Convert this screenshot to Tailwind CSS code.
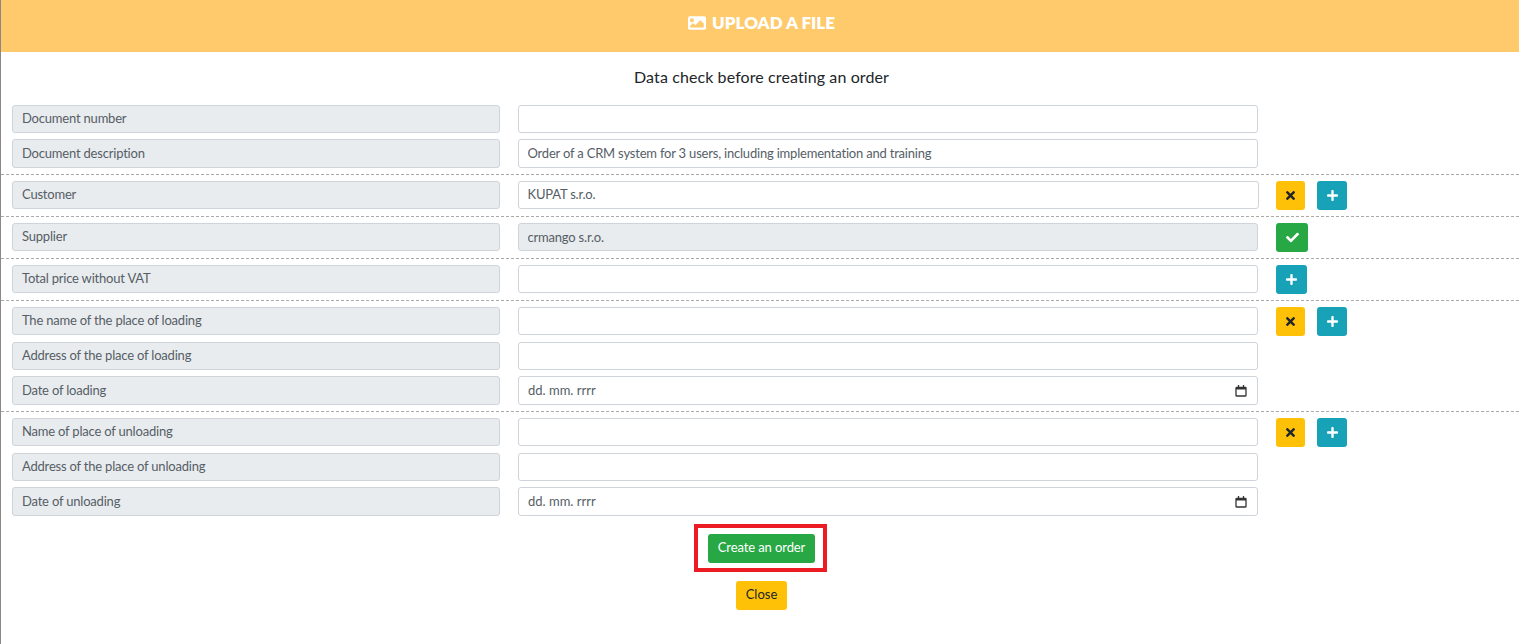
<!DOCTYPE html>
<html lang="en">
<head>
  <meta charset="UTF-8" />
  <meta name="viewport" content="width=device-width, initial-scale=1.0" />
  <title>Upload a file</title>
  <script src="https://cdn.jsdelivr.net/npm/@tailwindcss/browser@4"></script>
</head>
<body class="bg-white text-[#212529] font-[Lato,sans-serif] h-[644px] overflow-hidden border-l border-[#888]">

  <div class="h-[52px] pb-[6px] bg-[#ffca6b] flex items-center justify-center gap-[6px] pl-[3px] text-white text-[17px] font-extrabold">
    <svg class="w-[18px] h-[18px]" viewBox="0 0 512 512" fill="currentColor"><path d="M464 448H48c-26.51 0-48-21.49-48-48V112c0-26.51 21.49-48 48-48h416c26.51 0 48 21.49 48 48v288c0 26.51-21.49 48-48 48zM112 120c-30.928 0-56 25.072-56 56s25.072 56 56 56 56-25.072 56-56-25.072-56-56-56zM64 384h384V272l-87.515-87.515c-4.686-4.686-12.284-4.686-16.971 0L208 320l-55.515-55.515c-4.686-4.686-12.284-4.686-16.971 0L64 336v48z"/></svg>
    <span>UPLOAD A FILE</span>
  </div>

  <h2 class="h-[52.75px] pt-[15px] pl-[3px] text-center text-[16px] leading-[20px] tracking-[0.1px]">Data check before creating an order</h2>

  <!-- document -->
  <div class="px-[11px] pb-[6px] flex flex-col gap-[6px]">
    <div class="flex items-center gap-[18px]">
      <div class="w-[488px] h-[28.5px] px-[9px] pb-[0.5px] flex items-center bg-[#e9ecef] border border-[#ced4da] rounded-[3px] text-[13px] tracking-[-0.2px] text-[#565e66]">Document number</div>
      <input type="text" class="w-[740px] h-[28.5px] px-[8.5px] pb-[1px] border border-[#ced4da] rounded-[3px] text-[13px] tracking-[-0.2px] text-[#565e66]" />
    </div>
    <div class="flex items-center gap-[18px]">
      <div class="w-[488px] h-[28.5px] px-[9px] pb-[0.5px] flex items-center bg-[#e9ecef] border border-[#ced4da] rounded-[3px] text-[13px] tracking-[-0.2px] text-[#565e66]">Document description</div>
      <input type="text" value="Order of a CRM system for 3 users, including implementation and training" class="w-[740px] h-[28.5px] px-[8.5px] pb-[1px] border border-[#ced4da] rounded-[3px] text-[13px] tracking-[-0.2px] text-[#565e66]" />
    </div>
  </div>

  <!-- customer -->
  <div class="border-t border-dashed border-[#aaa] px-[11px] pt-[6px] pb-[6.5px]">
    <div class="flex items-center">
      <div class="w-[488px] h-[28.5px] px-[9px] pb-[0.5px] flex items-center bg-[#e9ecef] border border-[#ced4da] rounded-[3px] text-[13px] tracking-[-0.2px] text-[#565e66]">Customer</div>
      <input type="text" value="KUPAT s.r.o." class="ml-[18px] w-[741px] h-[28.5px] px-[8.5px] pb-[2px] border border-[#ced4da] rounded-[3px] text-[13px] tracking-[-0.2px] text-[#565e66]" />
      <button class="ml-[17px] my-[-0.25px] w-[29px] h-[29px] bg-[#ffc107] rounded-[3px] flex items-center justify-center text-[#212529]">
        <svg class="h-[13px] w-[9px]" viewBox="0 0 352 512" fill="currentColor"><path d="M242.72 256l100.07-100.07c12.28-12.28 12.28-32.19 0-44.48l-22.24-22.24c-12.28-12.28-32.19-12.28-44.48 0L176 189.28 75.93 89.21c-12.28-12.28-32.19-12.28-44.48 0L9.21 111.45c-12.28 12.28-12.28 32.19 0 44.48L109.28 256 9.21 356.07c-12.28 12.28-12.28 32.19 0 44.48l22.24 22.24c12.28 12.28 32.2 12.28 44.48 0L176 322.72l100.07 100.07c12.28 12.28 32.2 12.28 44.48 0l22.24-22.24c12.28-12.28 12.28-32.19 0-44.48L242.72 256z"/></svg>
      </button>
      <button class="ml-[12px] my-[-0.25px] w-[30px] h-[29px] bg-[#17a2b8] rounded-[3px] flex items-center justify-center text-white">
        <svg class="h-[13px] w-[11px]" viewBox="0 0 448 512" fill="currentColor"><path d="M416 208H272V64c0-17.67-14.33-32-32-32h-32c-17.67 0-32 14.33-32 32v144H32c-17.67 0-32 14.33-32 32v32c0 17.67 14.33 32 32 32h144v144c0 17.67 14.33 32 32 32h32c17.67 0 32-14.33 32-32V304h144c17.67 0 32-14.33 32-32v-32c0-17.67-14.33-32-32-32z"/></svg>
      </button>
    </div>
  </div>

  <!-- supplier -->
  <div class="border-t border-dashed border-[#aaa] px-[11px] pt-[6px] pb-[6.5px]">
    <div class="flex items-center">
      <div class="w-[488px] h-[28.5px] px-[9px] pb-[0.5px] flex items-center bg-[#e9ecef] border border-[#ced4da] rounded-[3px] text-[13px] tracking-[-0.2px] text-[#565e66]">Supplier</div>
      <input type="text" disabled value="crmango s.r.o." class="ml-[18px] w-[740px] h-[28.5px] px-[8.5px] pb-[1px] bg-[#e9ecef] border border-[#ced4da] rounded-[3px] text-[13px] tracking-[-0.2px] text-[#565e66]" />
      <button class="ml-[18px] my-[-0.25px] w-[32px] h-[29px] bg-[#28a745] rounded-[3px] flex items-center justify-center text-white">
        <svg class="h-[13px] w-[13px]" viewBox="0 0 512 512" fill="currentColor"><path d="M173.898 439.404l-166.4-166.4c-9.997-9.997-9.997-26.206 0-36.204l36.203-36.204c9.997-9.998 26.207-9.998 36.204 0L192 312.69 432.095 72.596c9.997-9.997 26.207-9.997 36.204 0l36.203 36.204c9.997 9.997 9.997 26.206 0 36.204l-294.4 294.401c-9.998 9.997-26.207 9.997-36.204-.001z"/></svg>
      </button>
    </div>
  </div>

  <!-- price -->
  <div class="border-t border-dashed border-[#aaa] px-[11px] pt-[6px] pb-[6.5px]">
    <div class="flex items-center">
      <div class="w-[488px] h-[28.5px] px-[9px] pb-[0.5px] flex items-center bg-[#e9ecef] border border-[#ced4da] rounded-[3px] text-[13px] tracking-[-0.2px] text-[#565e66]">Total price without VAT</div>
      <input type="text" class="ml-[18px] w-[740px] h-[28.5px] px-[8.5px] pb-[1px] border border-[#ced4da] rounded-[3px] text-[13px] tracking-[-0.2px] text-[#565e66]" />
      <button class="ml-[18px] my-[-0.25px] w-[31px] h-[29px] bg-[#17a2b8] rounded-[3px] flex items-center justify-center text-white">
        <svg class="h-[13px] w-[11px]" viewBox="0 0 448 512" fill="currentColor"><path d="M416 208H272V64c0-17.67-14.33-32-32-32h-32c-17.67 0-32 14.33-32 32v144H32c-17.67 0-32 14.33-32 32v32c0 17.67 14.33 32 32 32h144v144c0 17.67 14.33 32 32 32h32c17.67 0 32-14.33 32-32V304h144c17.67 0 32-14.33 32-32v-32c0-17.67-14.33-32-32-32z"/></svg>
      </button>
    </div>
  </div>

  <!-- loading -->
  <div class="border-t border-dashed border-[#aaa] px-[11px] pt-[6px] pb-[6px] flex flex-col gap-[6px]">
    <div class="flex items-center mb-[0.5px]">
      <div class="w-[488px] h-[28.5px] px-[9px] pb-[0.5px] flex items-center bg-[#e9ecef] border border-[#ced4da] rounded-[3px] text-[13px] tracking-[-0.2px] text-[#565e66]">The name of the place of loading</div>
      <input type="text" class="ml-[18px] w-[740px] h-[28.5px] px-[8.5px] pb-[1px] border border-[#ced4da] rounded-[3px] text-[13px] tracking-[-0.2px] text-[#565e66]" />
      <button class="ml-[18px] my-[-0.25px] w-[29px] h-[29px] bg-[#ffc107] rounded-[3px] flex items-center justify-center text-[#212529]">
        <svg class="h-[13px] w-[9px]" viewBox="0 0 352 512" fill="currentColor"><path d="M242.72 256l100.07-100.07c12.28-12.28 12.28-32.19 0-44.48l-22.24-22.24c-12.28-12.28-32.19-12.28-44.48 0L176 189.28 75.93 89.21c-12.28-12.28-32.19-12.28-44.48 0L9.21 111.45c-12.28 12.28-12.28 32.19 0 44.48L109.28 256 9.21 356.07c-12.28 12.28-12.28 32.19 0 44.48l22.24 22.24c12.28 12.28 32.2 12.28 44.48 0L176 322.72l100.07 100.07c12.28 12.28 32.2 12.28 44.48 0l22.24-22.24c12.28-12.28 12.28-32.19 0-44.48L242.72 256z"/></svg>
      </button>
      <button class="ml-[12px] my-[-0.25px] w-[30px] h-[29px] bg-[#17a2b8] rounded-[3px] flex items-center justify-center text-white">
        <svg class="h-[13px] w-[11px]" viewBox="0 0 448 512" fill="currentColor"><path d="M416 208H272V64c0-17.67-14.33-32-32-32h-32c-17.67 0-32 14.33-32 32v144H32c-17.67 0-32 14.33-32 32v32c0 17.67 14.33 32 32 32h144v144c0 17.67 14.33 32 32 32h32c17.67 0 32-14.33 32-32V304h144c17.67 0 32-14.33 32-32v-32c0-17.67-14.33-32-32-32z"/></svg>
      </button>
    </div>
    <div class="flex items-center gap-[18px]">
      <div class="w-[488px] h-[28.5px] px-[9px] pb-[0.5px] flex items-center bg-[#e9ecef] border border-[#ced4da] rounded-[3px] text-[13px] tracking-[-0.2px] text-[#565e66]">Address of the place of loading</div>
      <input type="text" class="w-[740px] h-[28.5px] px-[8.5px] pb-[1px] border border-[#ced4da] rounded-[3px] text-[13px] tracking-[-0.2px] text-[#565e66]" />
    </div>
    <div class="flex items-center gap-[18px]">
      <div class="w-[488px] h-[28.5px] px-[9px] pb-[0.5px] flex items-center bg-[#e9ecef] border border-[#ced4da] rounded-[3px] text-[13px] tracking-[-0.2px] text-[#565e66]">Date of loading</div>
      <div class="relative w-[740px] h-[28.5px]">
        <input type="text" value="dd. mm. rrrr" class="w-full h-full px-[9px] pb-[1px] border border-[#ced4da] rounded-[3px] text-[13px] text-[#565e66]" />
        <svg class="absolute right-[11px] top-[8px] w-[12px] h-[13px]" viewBox="0 0 12 13" fill="none" stroke="#333"><path d="M1.5 3.5h9a.5.5 0 0 1 .5.5v7.5a.5.5 0 0 1-.5.5h-9a.5.5 0 0 1-.5-.5V4a.5.5 0 0 1 .5-.5z" stroke-width="1.3"/><path d="M1 4.5h10" stroke-width="2"/><path d="M3.5 1v2M8.5 1v2" stroke-width="1.3"/></svg>
      </div>
    </div>
  </div>

  <!-- unloading -->
  <div class="border-t border-dashed border-[#aaa] px-[11px] pt-[6px] flex flex-col gap-[6px]">
    <div class="flex items-center mb-[0.5px]">
      <div class="w-[488px] h-[28.5px] px-[9px] pb-[0.5px] flex items-center bg-[#e9ecef] border border-[#ced4da] rounded-[3px] text-[13px] tracking-[-0.2px] text-[#565e66]">Name of place of unloading</div>
      <input type="text" class="ml-[18px] w-[740px] h-[28.5px] px-[8.5px] pb-[1px] border border-[#ced4da] rounded-[3px] text-[13px] tracking-[-0.2px] text-[#565e66]" />
      <button class="ml-[18px] my-[-0.25px] w-[29px] h-[29px] bg-[#ffc107] rounded-[3px] flex items-center justify-center text-[#212529]">
        <svg class="h-[13px] w-[9px]" viewBox="0 0 352 512" fill="currentColor"><path d="M242.72 256l100.07-100.07c12.28-12.28 12.28-32.19 0-44.48l-22.24-22.24c-12.28-12.28-32.19-12.28-44.48 0L176 189.28 75.93 89.21c-12.28-12.28-32.19-12.28-44.48 0L9.21 111.45c-12.28 12.28-12.28 32.19 0 44.48L109.28 256 9.21 356.07c-12.28 12.28-12.28 32.19 0 44.48l22.24 22.24c12.28 12.28 32.2 12.28 44.48 0L176 322.72l100.07 100.07c12.28 12.28 32.2 12.28 44.48 0l22.24-22.24c12.28-12.28 12.28-32.19 0-44.48L242.72 256z"/></svg>
      </button>
      <button class="ml-[12px] my-[-0.25px] w-[30px] h-[29px] bg-[#17a2b8] rounded-[3px] flex items-center justify-center text-white">
        <svg class="h-[13px] w-[11px]" viewBox="0 0 448 512" fill="currentColor"><path d="M416 208H272V64c0-17.67-14.33-32-32-32h-32c-17.67 0-32 14.33-32 32v144H32c-17.67 0-32 14.33-32 32v32c0 17.67 14.33 32 32 32h144v144c0 17.67 14.33 32 32 32h32c17.67 0 32-14.33 32-32V304h144c17.67 0 32-14.33 32-32v-32c0-17.67-14.33-32-32-32z"/></svg>
      </button>
    </div>
    <div class="flex items-center gap-[18px]">
      <div class="w-[488px] h-[28.5px] px-[9px] pb-[0.5px] flex items-center bg-[#e9ecef] border border-[#ced4da] rounded-[3px] text-[13px] tracking-[-0.2px] text-[#565e66]">Address of the place of unloading</div>
      <input type="text" class="w-[740px] h-[28.5px] px-[8.5px] pb-[1px] border border-[#ced4da] rounded-[3px] text-[13px] tracking-[-0.2px] text-[#565e66]" />
    </div>
    <div class="flex items-center gap-[18px]">
      <div class="w-[488px] h-[28.5px] px-[9px] pb-[0.5px] flex items-center bg-[#e9ecef] border border-[#ced4da] rounded-[3px] text-[13px] tracking-[-0.2px] text-[#565e66]">Date of unloading</div>
      <div class="relative w-[740px] h-[28.5px]">
        <input type="text" value="dd. mm. rrrr" class="w-full h-full px-[9px] pb-[1px] border border-[#ced4da] rounded-[3px] text-[13px] text-[#565e66]" />
        <svg class="absolute right-[11px] top-[8px] w-[12px] h-[13px]" viewBox="0 0 12 13" fill="none" stroke="#333"><path d="M1.5 3.5h9a.5.5 0 0 1 .5.5v7.5a.5.5 0 0 1-.5.5h-9a.5.5 0 0 1-.5-.5V4a.5.5 0 0 1 .5-.5z" stroke-width="1.3"/><path d="M1 4.5h10" stroke-width="2"/><path d="M3.5 1v2M8.5 1v2" stroke-width="1.3"/></svg>
      </div>
    </div>
  </div>

  <!-- actions -->
  <div class="flex flex-col items-center pl-[1px] pt-[8.25px]">
    <div class="w-[133px] h-[48px] pl-[2px] border-[4px] border-[#ed1c24] flex items-center justify-center">
      <button class="w-[107px] h-[29px] bg-[#28a745] rounded-[3px] text-white text-[13px] tracking-[-0.1px] pb-[1px]">Create an order</button>
    </div>
    <button class="mt-[9px] ml-[2px] w-[51px] h-[29px] bg-[#ffc107] rounded-[3px] text-[#212529] text-[13px] pb-[1px]">Close</button>
  </div>

</body>
</html>
